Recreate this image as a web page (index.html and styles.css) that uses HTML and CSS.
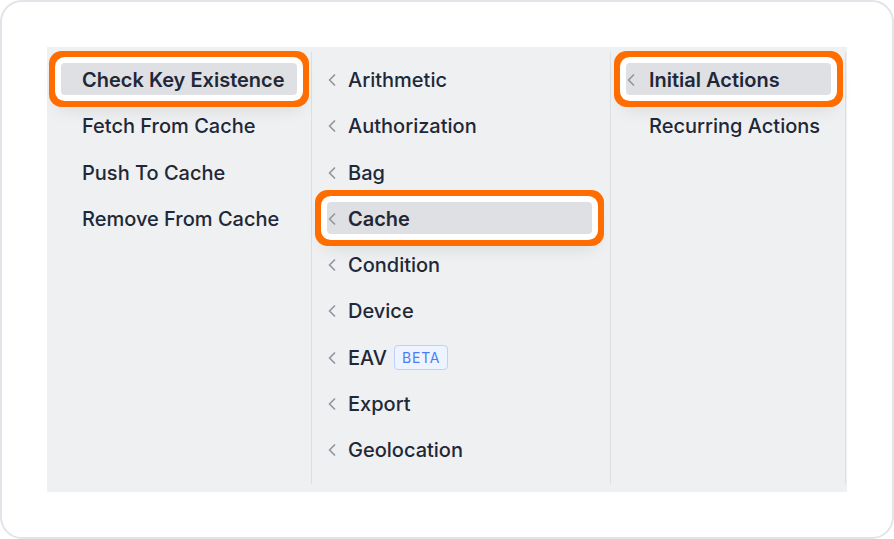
FILE: index.html
```html
<!DOCTYPE html>
<html lang="en">
<head>
    <meta charset="UTF-8">
    <meta name="viewport" content="width=device-width, initial-scale=1.0">
    <title>Action Menu</title>
    <link rel="stylesheet" href="styles.css">
</head>
<body>

    <div class="frame">
        <div class="panel">

            <div class="column col-actions">
                <div class="item selected">Check Key Existence</div>
                <div class="item">Fetch From Cache</div>
                <div class="item">Push To Cache</div>
                <div class="item">Remove From Cache</div>
            </div>

            <div class="column col-groups">
                <div class="item"><span class="chev"><svg width="8" height="12" viewBox="0 0 8 12"><polyline points="6.5,1 1.5,6 6.5,11"/></svg></span>Arithmetic</div>
                <div class="item"><span class="chev"><svg width="8" height="12" viewBox="0 0 8 12"><polyline points="6.5,1 1.5,6 6.5,11"/></svg></span>Authorization</div>
                <div class="item"><span class="chev"><svg width="8" height="12" viewBox="0 0 8 12"><polyline points="6.5,1 1.5,6 6.5,11"/></svg></span>Bag</div>
                <div class="item selected"><span class="chev"><svg width="8" height="12" viewBox="0 0 8 12"><polyline points="6.5,1 1.5,6 6.5,11"/></svg></span>Cache</div>
                <div class="item"><span class="chev"><svg width="8" height="12" viewBox="0 0 8 12"><polyline points="6.5,1 1.5,6 6.5,11"/></svg></span>Condition</div>
                <div class="item"><span class="chev"><svg width="8" height="12" viewBox="0 0 8 12"><polyline points="6.5,1 1.5,6 6.5,11"/></svg></span>Device</div>
                <div class="item"><span class="chev"><svg width="8" height="12" viewBox="0 0 8 12"><polyline points="6.5,1 1.5,6 6.5,11"/></svg></span>EAV <span class="badge">BETA</span></div>
                <div class="item"><span class="chev"><svg width="8" height="12" viewBox="0 0 8 12"><polyline points="6.5,1 1.5,6 6.5,11"/></svg></span>Export</div>
                <div class="item"><span class="chev"><svg width="8" height="12" viewBox="0 0 8 12"><polyline points="6.5,1 1.5,6 6.5,11"/></svg></span>Geolocation</div>
            </div>

            <div class="column col-triggers">
                <div class="item selected"><span class="chev"><svg width="8" height="12" viewBox="0 0 8 12"><polyline points="6.5,1 1.5,6 6.5,11"/></svg></span>Initial Actions</div>
                <div class="item"><span class="chev"></span>Recurring Actions</div>
            </div>

        </div>
    </div>

</body>
</html>
```

FILE: styles.css
```css
body {
    margin: 0;
    font-family: Inter, "Noto Sans", sans-serif;
    background: #fff;
}
.frame {
    width: 894px;
    height: 539px;
    box-sizing: border-box;
    border: 2px solid #e1e4e8;
    border-radius: 22px;
    padding: 45px;
    background: #fff;
}
.panel {
    display: flex;
    height: 100%;
    box-sizing: border-box;
    padding: 5px 0 8px;
    background: #eff0f2;
}
.column {
    box-sizing: border-box;
    padding: 11px 14px 0;
    border-right: 1px solid #dcdee2;
}
.col-actions {
    width: 265px;
}
.col-groups {
    width: 299px;
    padding-left: 15px;
    padding-right: 18px;
}
.col-triggers {
    width: 235px;
    padding-left: 15px;
}
.item {
    display: flex;
    align-items: center;
    height: 32px;
    margin-bottom: 14.25px;
    padding-top: 2px;
    padding-left: 21px;
    box-sizing: border-box;
    border-radius: 4px;
    font-size: 20px;
    font-weight: 500;
    color: #1e2838;
    white-space: nowrap;
}
.col-groups .item,
.col-triggers .item {
    padding-left: 1px;
}
.chev {
    display: flex;
    width: 20px;
    flex-shrink: 0;
}
.col-triggers .chev {
    width: 22px;
}
.chev svg {
    fill: none;
    stroke: #93979f;
    stroke-width: 1.7;
    stroke-linecap: round;
    stroke-linejoin: round;
}
.item.selected {
    background: #dfe0e4;
    font-weight: 600;
    box-shadow: 0 0 0 6px #fff, 0 0 0 12px #ff6d00, 0 10px 18px 4px rgba(0, 0, 0, 0.10);
}
.badge {
    margin-left: 7px;
    padding: 2px 7px;
    border: 1px solid #bdd1fc;
    border-radius: 4px;
    background: #eef4ff;
    color: #4a7cf5;
    font-size: 14px;
    font-weight: 400;
    letter-spacing: 0.8px;
    line-height: 19px;
}
```
